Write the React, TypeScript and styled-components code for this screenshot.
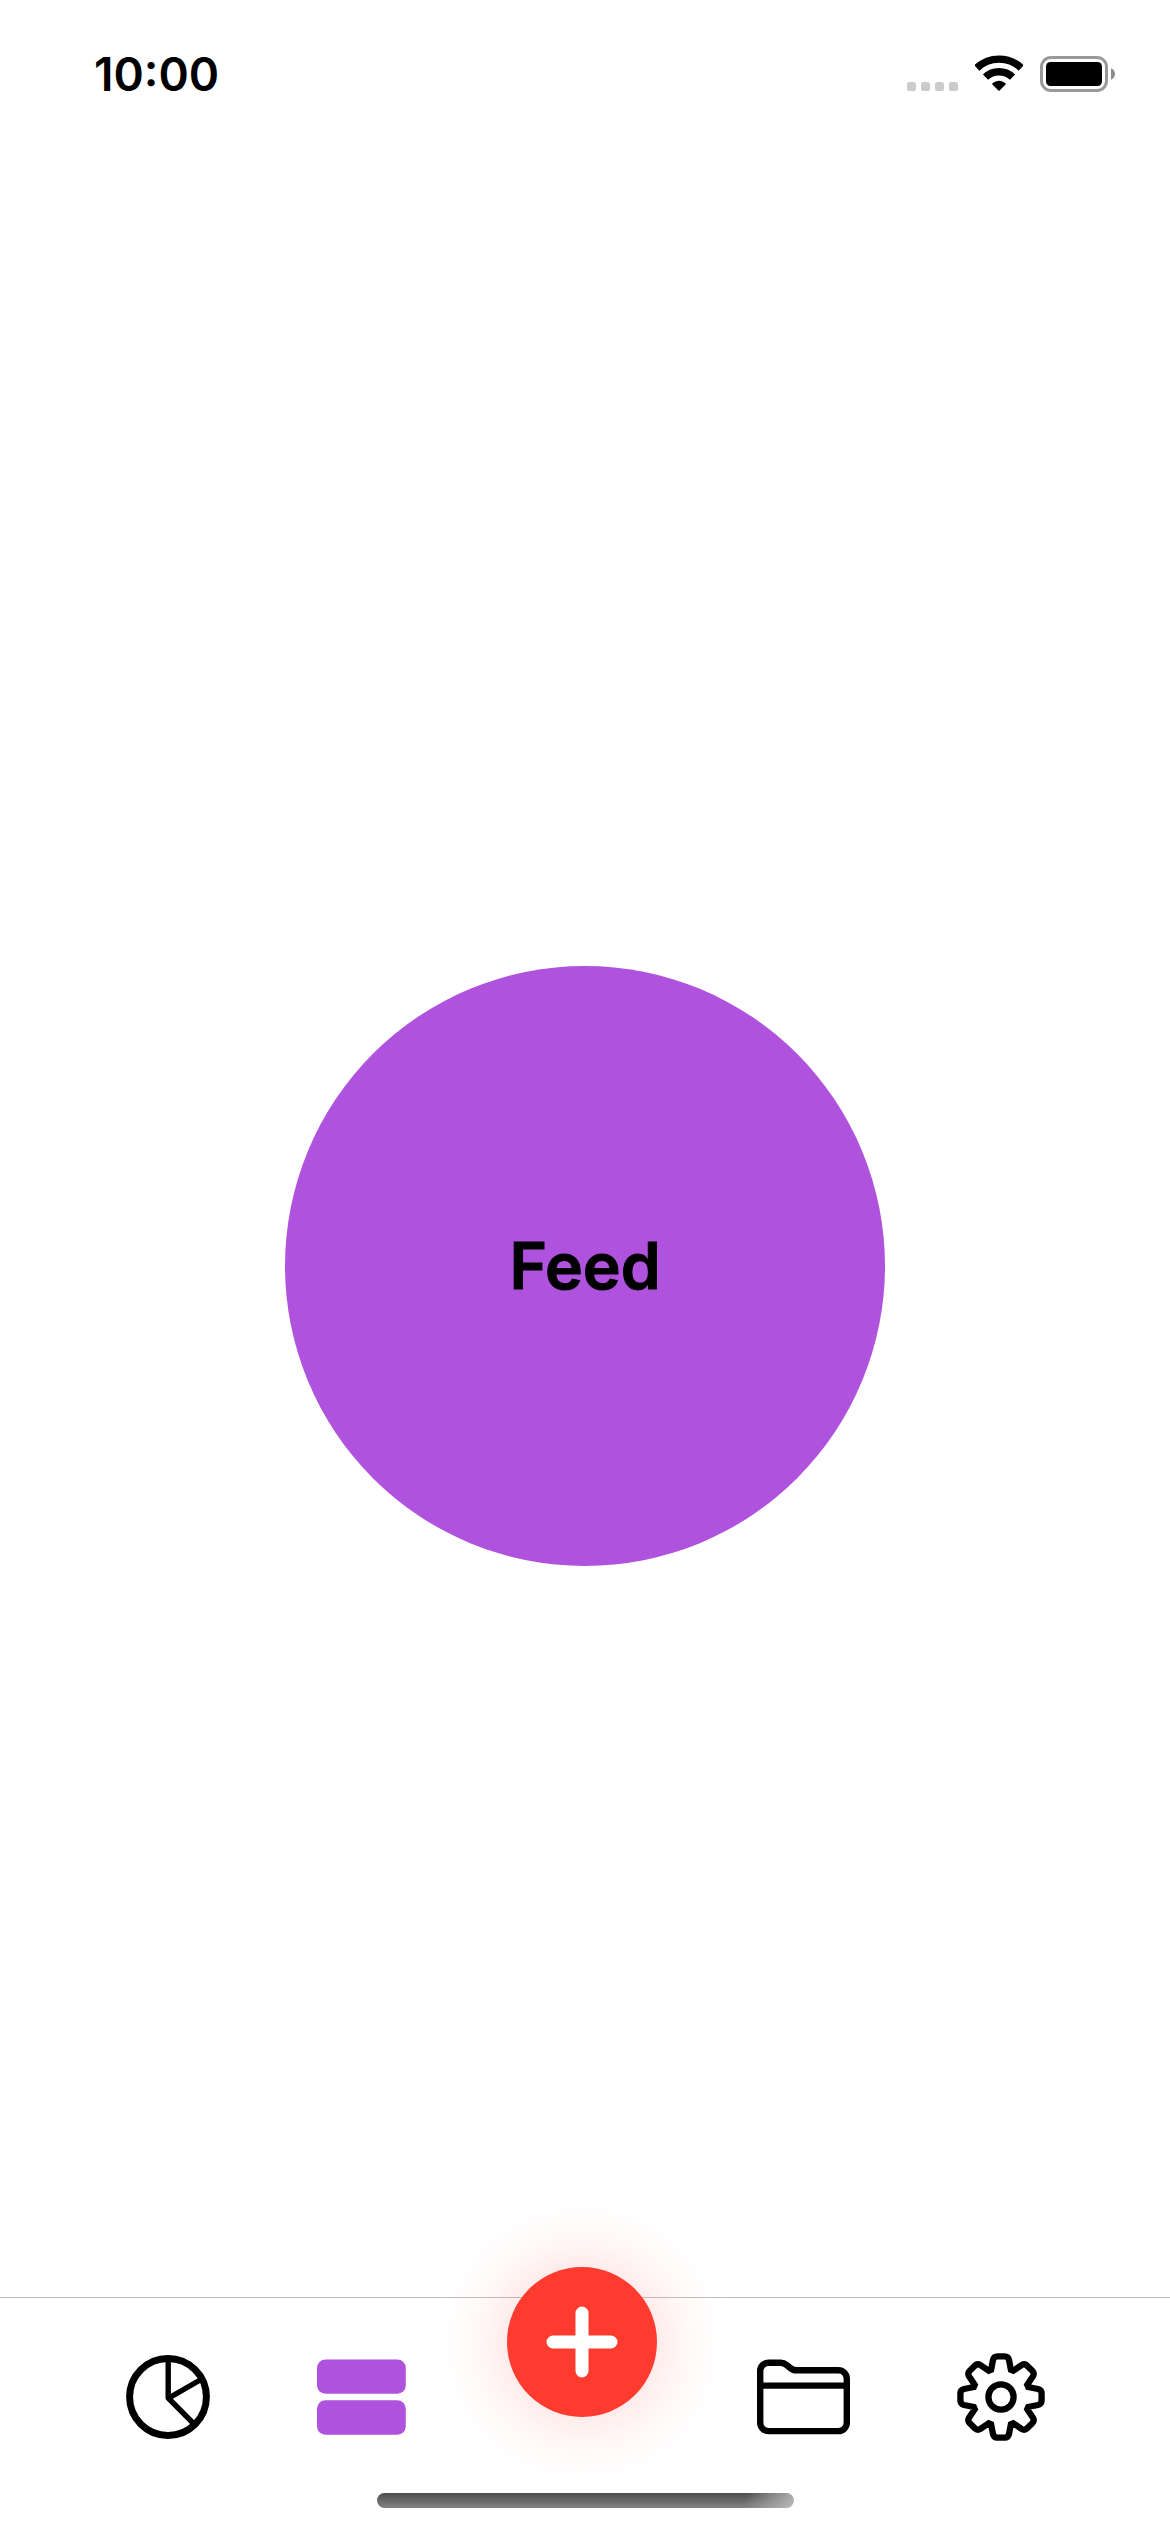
import React, { useState } from "react";
import styled, { createGlobalStyle } from "styled-components";

const GlobalStyle = createGlobalStyle`
  *, *::before, *::after {
    box-sizing: border-box;
  }
  body {
    margin: 0;
    background: #ffffff;
    color: #000000;
    font-family: Inter, "Liberation Sans", sans-serif;
  }
`;

const ACCENT = "#af52de";
const RED = "#ff3b30";

const Screen = styled.div`
  display: flex;
  flex-direction: column;
  min-height: 100vh;
`;

const StatusBar = styled.header`
  display: flex;
  align-items: center;
  justify-content: space-between;
  height: 148px;
  padding: 0 55px 0 94px;
`;

const Clock = styled.time`
  font-size: 46px;
  line-height: 56px;
  font-weight: 600;
`;

const StatusIcons = styled.div`
  display: flex;
  align-items: center;
  gap: 17px;
`;

const Content = styled.main`
  display: flex;
  flex: 1;
  align-items: center;
  justify-content: center;
  padding-top: 87px;
`;

const Disc = styled.section`
  display: flex;
  align-items: center;
  justify-content: center;
  width: 600px;
  height: 600px;
  border-radius: 50%;
  background: ${ACCENT};
`;

const Title = styled.h1`
  margin: 0;
  font-size: 64px;
  line-height: 78px;
  font-weight: 600;
  -webkit-text-stroke: 1px #000000;
`;

const TabBar = styled.footer`
  display: flex;
  flex-direction: column;
  align-items: center;
  gap: 5px;
  padding: 8px 0 24px;
  border-top: 1px solid #bfbfbf;
`;

const Tabs = styled.nav`
  display: flex;
  align-items: center;
  justify-content: space-between;
  width: 100%;
  height: 182px;
  padding: 0 118px 0 119px;
`;

const Tab = styled.button<{ $active: boolean }>`
  display: flex;
  align-items: center;
  height: 100%;
  padding: 0 7px;
  border: 0;
  background: none;
  color: ${({ $active }) => ($active ? ACCENT : "#000000")};
  cursor: pointer;
`;

const AddButton = styled.button`
  display: flex;
  align-items: center;
  justify-content: center;
  align-self: flex-start;
  width: 150px;
  height: 150px;
  margin-top: -39px;
  padding: 0;
  border: 0;
  border-radius: 50%;
  background: ${RED};
  color: #ffffff;
  box-shadow: 0 0 76px rgba(255, 59, 48, 0.24);
  cursor: pointer;
`;

const HomeIndicator = styled.div`
  width: 417px;
  height: 15px;
  border-radius: 8px;
  background:
    linear-gradient(100deg, transparent 88%, rgba(200, 200, 200, 0.8) 100%),
    linear-gradient(#4e4e4e, #828282);
`;

const SignalDots = () => (
  <svg width="51" height="36" viewBox="0 0 51 36" fill="#cbcbcb" aria-hidden="true">
    {[0, 14, 28, 42].map((x) => (
      <rect key={x} x={x} y="26" width="9" height="9" rx="2.6" />
    ))}
  </svg>
);

const Wifi = () => (
  <svg width="48" height="38" viewBox="0 0 48 38" fill="none" stroke="currentColor" aria-hidden="true">
    <path d="M1.8 13A32.2 32.2 0 0 1 46.2 13" strokeWidth="7.4" />
    <path d="M10.5 22.2A19.5 19.5 0 0 1 37.5 22.2" strokeWidth="7.4" />
    <path
      d="M24 35L18 28.9A8.6 8.6 0 0 1 30 28.9Z"
      fill="currentColor"
      strokeWidth="1.6"
      strokeLinejoin="round"
    />
  </svg>
);

const Battery = () => (
  <svg width="75" height="36" viewBox="0 0 75 36" aria-hidden="true">
    <rect x="1.5" y="1.5" width="65" height="33" rx="9.5" fill="none" stroke="#999999" strokeWidth="3" />
    <rect x="6" y="6" width="56" height="24" rx="4.5" fill="#000000" />
    <path d="M71 12.2C73.4 13.2 75 15.4 75 18S73.4 22.8 71 23.8Z" fill="#8a8a8a" />
  </svg>
);

const PieIcon = () => (
  <svg width="84" height="84" viewBox="0 0 84 84" fill="none" stroke="currentColor" aria-hidden="true">
    <circle cx="42" cy="42" r="38.4" strokeWidth="7" />
    <path d="M42.2 5V43L67.5 68.5M42.2 43.4L75 24.5" strokeWidth="5.4" strokeLinejoin="round" />
  </svg>
);

const RowsIcon = () => (
  <svg width="89" height="76" viewBox="0 0 89 76" fill="currentColor" aria-hidden="true">
    <rect y="0.4" width="88.8" height="34.4" rx="8.5" />
    <rect y="41.2" width="88.8" height="34.6" rx="8.5" />
  </svg>
);

const PlusIcon = () => (
  <svg width="72" height="72" viewBox="0 0 72 72" fill="none" stroke="currentColor" aria-hidden="true">
    <path d="M36 7V65M7 36H65" strokeWidth="13" strokeLinecap="round" />
  </svg>
);

const FolderIcon = () => (
  <svg width="93" height="76" viewBox="0 0 93 76" fill="none" stroke="currentColor" strokeWidth="6.4" aria-hidden="true">
    <path d="M3.2 12A8.3 8.3 0 0 1 11.5 3.7H23.5C26.6 3.7 28 4.5 30 6.2L32.6 8.5C34.6 10.3 36.4 11.3 39.4 11.3H81.5A8.3 8.3 0 0 1 89.8 19.6V63.8A8.3 8.3 0 0 1 81.5 72.1H11.5A8.3 8.3 0 0 1 3.2 63.8Z" />
    <path d="M3.2 26.6H89.8" />
  </svg>
);

const TOOTH: [number, number][] = [
  [-9.9, -27.2],
  [-8, -37],
  [-7.2, -40.6],
  [-3.6, -40.6],
  [3.6, -40.6],
  [7.2, -40.6],
  [8, -37],
  [9.9, -27.2],
];

/* Eight copies of one tooth, each turned by 45 degrees, joined into one outline. */
const gearOutline = Array.from({ length: 8 }, (_, i) => {
  const a = (i * Math.PI) / 4;
  const p = TOOTH.map(([x, y]) => {
    const px = x * Math.cos(a) - y * Math.sin(a);
    const py = x * Math.sin(a) + y * Math.cos(a);
    return `${px.toFixed(2)} ${py.toFixed(2)}`;
  });
  return `${i === 0 ? "M" : "L"}${p[0]}L${p[1]}Q${p[2]} ${p[3]}L${p[4]}Q${p[5]} ${p[6]}L${p[7]}`;
}).join("") + "Z";

const GearIcon = () => (
  <svg width="88" height="88" viewBox="-44 -44 88 88" fill="none" stroke="currentColor" strokeWidth="6.3" aria-hidden="true">
    <path d={gearOutline} />
    <circle r="12.6" />
  </svg>
);

const leftTabs = [
  { id: "overview", label: "Overview", Icon: PieIcon },
  { id: "feed", label: "Feed", Icon: RowsIcon },
];

const rightTabs = [
  { id: "files", label: "Files", Icon: FolderIcon },
  { id: "settings", label: "Settings", Icon: GearIcon },
];

export default function App() {
  const [active, setActive] = useState("feed");
  const current = [...leftTabs, ...rightTabs].find((tab) => tab.id === active);

  const renderTab = ({ id, label, Icon }: (typeof leftTabs)[number]) => (
    <Tab key={id} type="button" aria-label={label} $active={active === id} onClick={() => setActive(id)}>
      <Icon />
    </Tab>
  );

  return (
    <Screen>
      <GlobalStyle />
      <StatusBar>
        <Clock>10:00</Clock>
        <StatusIcons>
          <SignalDots />
          <Wifi />
          <Battery />
        </StatusIcons>
      </StatusBar>
      <Content>
        <Disc>
          <Title>{current?.label}</Title>
        </Disc>
      </Content>
      <TabBar>
        <Tabs>
          {leftTabs.map(renderTab)}
          <AddButton type="button" aria-label="Add">
            <PlusIcon />
          </AddButton>
          {rightTabs.map(renderTab)}
        </Tabs>
        <HomeIndicator />
      </TabBar>
    </Screen>
  );
}
